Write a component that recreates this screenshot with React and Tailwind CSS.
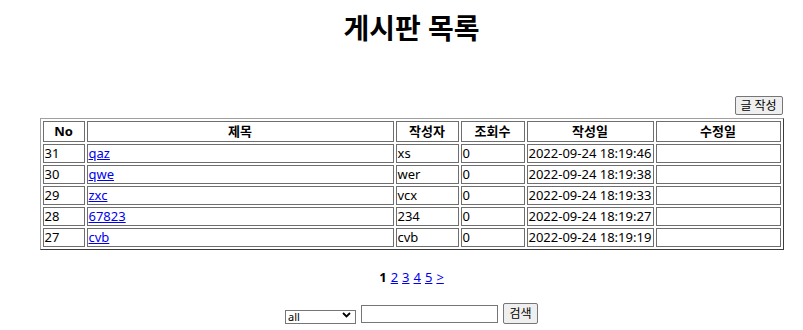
import { useState } from 'react'

const POSTS = [
  { no: 31, title: 'qaz', writer: 'xs', hit: 0, date: '2022-09-24 18:19:46' },
  { no: 30, title: 'qwe', writer: 'wer', hit: 0, date: '2022-09-24 18:19:38' },
  { no: 29, title: 'zxc', writer: 'vcx', hit: 0, date: '2022-09-24 18:19:33' },
  { no: 28, title: '67823', writer: '234', hit: 0, date: '2022-09-24 18:19:27' },
  { no: 27, title: 'cvb', writer: 'cvb', hit: 0, date: '2022-09-24 18:19:19' },
]

// inset-style cell border like a border="1" table
const cell = 'border border-[#6e6e6e] px-[1px] py-0 text-left align-middle font-normal'
const head = 'border border-[#6e6e6e] px-[1px] py-0 text-center align-middle font-bold'

export default function App() {
  const [field, setField] = useState('all')
  const [keyword, setKeyword] = useState('')

  return (
    <div className="w-screen h-screen overflow-hidden bg-white">
      <div className="w-[823px] text-[13px] leading-[17px] text-black font-['Noto_Sans','Noto_Sans_CJK_KR',sans-serif]">
        {/* Title */}
        <h1 className="pt-[12px] text-center text-[28px] leading-[32px] font-bold">게시판 목록</h1>

        {/* Write button */}
        <div className="w-[744px] mx-auto mt-[52px] flex justify-end pr-[1px]">
          <button className="h-[19px] w-[48px] flex items-center justify-center rounded-[2px] border border-[#767676] bg-[#efefef] text-[12px] leading-none">
            글 작성
          </button>
        </div>

        {/* Board table */}
        <table className="mx-auto mt-[3px] w-[744px] table-fixed border-separate border-spacing-[2px] border border-t-[#a0a0a0] border-l-[#a0a0a0] border-r-[#3c3c3c] border-b-[#3c3c3c]">
          <thead>
            <tr className="h-[21px]">
              <th className={`${head} w-[42px]`}>No</th>
              <th className={`${head} w-[307px]`}>제목</th>
              <th className={`${head} w-[63px]`}>작성자</th>
              <th className={`${head} w-[64px]`}>조회수</th>
              <th className={`${head} w-[127px]`}>작성일</th>
              <th className={`${head} w-[125px]`}>수정일</th>
            </tr>
          </thead>
          <tbody>
            {POSTS.map(p => (
              <tr key={p.no} className="h-[19px]">
                <td className={cell}>{p.no}</td>
                <td className={cell}>
                  <a href="#" className="text-[#0000ee] underline">{p.title}</a>
                </td>
                <td className={cell}>{p.writer}</td>
                <td className={cell}>{p.hit}</td>
                <td className={cell}>{p.date}</td>
                <td className={cell}></td>
              </tr>
            ))}
          </tbody>
        </table>

        {/* Paging */}
        <div className="mt-[19px] flex justify-center gap-[4px] text-[13px] leading-[17px]">
          <b>1</b>
          <a href="#" className="text-[#0000ee] underline">2</a>
          <a href="#" className="text-[#0000ee] underline">3</a>
          <a href="#" className="text-[#0000ee] underline">4</a>
          <a href="#" className="text-[#0000ee] underline">5</a>
          <a href="#" className="text-[#0000ee] underline">&gt;</a>
        </div>

        {/* Search */}
        <form className="mt-[17px] flex justify-center items-center gap-[5px]" onSubmit={e => e.preventDefault()}>
          <div className="relative w-[71px] h-[14px] mt-[3px]">
            <select
              value={field}
              onChange={e => setField(e.target.value)}
              className="appearance-none w-full h-full border border-[#767676] bg-white pl-[2px] text-[11px] leading-[12px]"
            >
              <option value="all">all</option>
              <option value="title">제목</option>
              <option value="writer">작성자</option>
            </select>
            <svg className="absolute right-[5px] top-[4px] pointer-events-none" width="9" height="6" viewBox="0 0 9 6">
              <path d="M1 1 L4.5 4.5 L8 1" fill="none" stroke="#000" strokeWidth="1.8" />
            </svg>
          </div>
          <input
            value={keyword}
            onChange={e => setKeyword(e.target.value)}
            className="w-[137px] h-[18px] border border-[#767676] bg-white"
          />
          <button className="h-[21px] w-[35px] flex items-center justify-center rounded-[2px] border border-[#767676] bg-[#efefef] text-[12px] leading-none">
            검색
          </button>
        </form>
      </div>
    </div>
  )
}
